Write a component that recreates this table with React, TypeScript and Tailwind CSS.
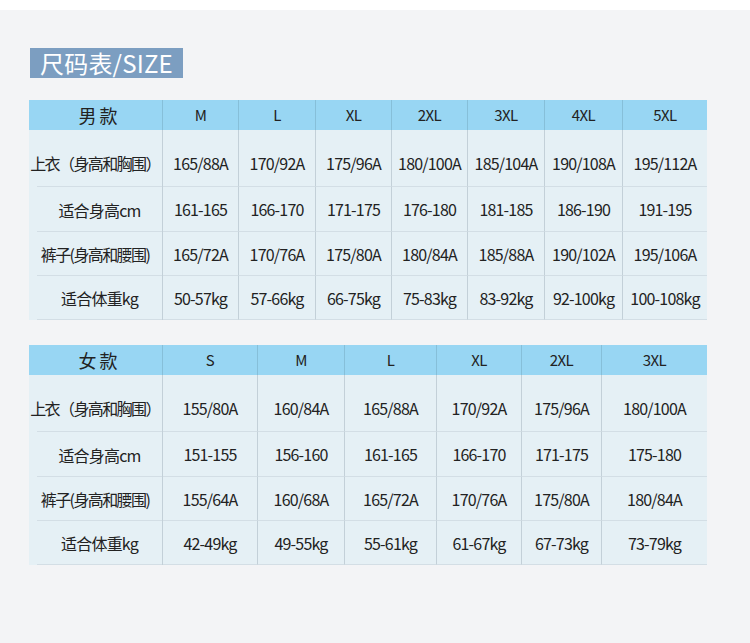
const menCols = ['M', 'L', 'XL', '2XL', '3XL', '4XL', '5XL'];
const menRows = [
  ['上衣（身高和胸围）', '165/88A', '170/92A', '175/96A', '180/100A', '185/104A', '190/108A', '195/112A'],
  ['适合身高cm', '161-165', '166-170', '171-175', '176-180', '181-185', '186-190', '191-195'],
  ['裤子(身高和腰围)', '165/72A', '170/76A', '175/80A', '180/84A', '185/88A', '190/102A', '195/106A'],
  ['适合体重kg', '50-57kg', '57-66kg', '66-75kg', '75-83kg', '83-92kg', '92-100kg', '100-108kg'],
];

const womenCols = ['S', 'M', 'L', 'XL', '2XL', '3XL'];
const womenRows = [
  ['上衣（身高和胸围）', '155/80A', '160/84A', '165/88A', '170/92A', '175/96A', '180/100A'],
  ['适合身高cm', '151-155', '156-160', '161-165', '166-170', '171-175', '175-180'],
  ['裤子(身高和腰围)', '155/64A', '160/68A', '165/72A', '170/76A', '175/80A', '180/84A'],
  ['适合体重kg', '42-49kg', '49-55kg', '55-61kg', '61-67kg', '67-73kg', '73-79kg'],
];

const rowHeights = ['h-[57px] pt-[9px]', 'h-[45px]', 'h-[44px]', 'h-[44px]'];

function SizeTable({
  title,
  cols,
  rows,
  gridClass,
}: {
  title: string;
  cols: string[];
  rows: string[][];
  gridClass: string;
}) {
  return (
    <div className="w-[678px] bg-[#e5f0f5] text-[#222]">
      {/* header */}
      <div className={`grid ${gridClass} h-[30px] bg-[#98d6f3]`}>
        <div className="flex items-center justify-center border-r border-[#86bfd9] pl-[8px] text-[18px] tracking-[3px]">
          {title}
        </div>
        {cols.map((c, i) => (
          <div
            key={c}
            className={`flex items-center justify-center text-[15px] tracking-[-0.5px] ${
              i < cols.length - 1 ? 'border-r border-[#86bfd9]' : ''
            }`}
          >
            {c}
          </div>
        ))}
      </div>

      {/* body */}
      {rows.map((row, r) => (
        <div key={r} className={`grid ${gridClass}`}>
          {row.map((cell, i) => (
            <div
              key={i}
              className={`flex items-center justify-center whitespace-nowrap text-[16px] tracking-[-0.8px] ${rowHeights[r]} ${
                i === 0
                  ? 'pl-[8px] bg-[linear-gradient(to_right,transparent_8px,#d3dee5_8px)] bg-[length:100%_1px] bg-bottom bg-no-repeat'
                  : 'border-b border-[#d3dee5]'
              } ${i < row.length - 1 ? 'border-r border-r-[#c3d0d8]' : ''}`}
            >
              <span className={i === 0 && cell.length > 8 ? 'mr-[9px] tracking-[-1.6px]' : ''}>{cell}</span>
            </div>
          ))}
        </div>
      ))}
    </div>
  );
}

export default function App() {
  return (
    <div
      className="bg-white pt-[10px]"
      style={{ fontFamily: '"Noto Sans CJK SC", "Noto Sans", sans-serif' }}
    >
      <div className="min-h-[633px] bg-[#f3f4f6] pl-[29px] pt-[38px]">
        <div className="ml-px flex h-[30px] w-[153px] items-center bg-[#7c9ec1] pl-[10px] text-[24px] tracking-[0.2px] text-white">
          尺码表/SIZE
        </div>

        <div className="mt-[22px]">
          <SizeTable
            title="男款"
            cols={menCols}
            rows={menRows}
            gridClass="grid-cols-[134px_76px_77px_76px_76px_77px_78px_84px]"
          />
        </div>

        <div className="mt-[25px]">
          <SizeTable
            title="女款"
            cols={womenCols}
            rows={womenRows}
            gridClass="grid-cols-[134px_95px_87px_92px_85px_80px_105px]"
          />
        </div>
      </div>
    </div>
  );
}
